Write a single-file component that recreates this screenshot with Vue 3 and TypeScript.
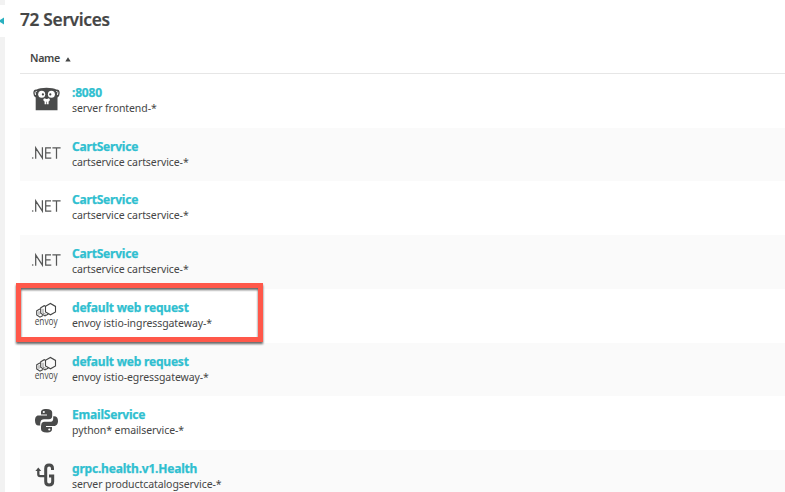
<script setup lang="ts">
type IconName = 'go' | 'dotnet' | 'envoy' | 'python' | 'grpc'

interface Service {
  name: string
  detail: string
  icon: IconName
  highlighted?: boolean
}

const services: Service[] = [
  { name: ':8080', detail: 'server frontend-*', icon: 'go' },
  { name: 'CartService', detail: 'cartservice cartservice-*', icon: 'dotnet' },
  { name: 'CartService', detail: 'cartservice cartservice-*', icon: 'dotnet' },
  { name: 'CartService', detail: 'cartservice cartservice-*', icon: 'dotnet' },
  { name: 'default web request', detail: 'envoy istio-ingressgateway-*', icon: 'envoy', highlighted: true },
  { name: 'default web request', detail: 'envoy istio-egressgateway-*', icon: 'envoy' },
  { name: 'EmailService', detail: 'python* emailservice-*', icon: 'python' },
  { name: 'grpc.health.v1.Health', detail: 'server productcatalogservice-*', icon: 'grpc' },
]
</script>

<template>
  <div class="page">
    <aside class="rail">
      <div class="collapse">
        <svg viewBox="0 0 5 8" width="5" height="8"><path d="M-1.5 4 L4 0.4 V7.6 Z" fill="#2ab0c0" /></svg>
      </div>
    </aside>
    <main class="content">
      <h1>72 Services</h1>
      <div class="head">
        <span>Name</span>
        <svg class="sort" viewBox="0 0 6 5" width="6" height="5"><path d="M0.3 4.6 L3 0.3 L5.7 4.6 Z" fill="#454646" /></svg>
      </div>
      <ul class="list">
        <li v-for="(service, i) in services" :key="i" class="row">
          <svg class="icon" viewBox="0 0 36 34" width="36" height="34">
            <g v-if="service.icon === 'go'">
              <path d="M7.7 28.2 V15.5 Q5.3 14 5.3 11 Q5.4 7.2 8.8 7.6 Q11.5 5.8 18.5 5.8 Q25.5 5.8 28.2 7.6 Q31.6 7.2 31.7 11 Q31.7 14 29.5 15.5 V28.2 Z" fill="#4a4b4b" />
              <path d="M7.5 12.9 Q6.2 10.2 8.7 9 M29.5 12.9 Q30.8 10.2 28.3 9" fill="none" stroke="#fff" stroke-width="1" />
              <circle cx="13.7" cy="12.2" r="3.5" fill="#fff" />
              <circle cx="23.4" cy="12.2" r="3.5" fill="#fff" />
              <circle cx="14.9" cy="12.4" r="1.1" fill="#454646" />
              <circle cx="22.3" cy="12.4" r="1.1" fill="#454646" />
              <ellipse cx="18.6" cy="17.8" rx="3.3" ry="1.9" fill="#fff" />
              <ellipse cx="18.6" cy="16" rx="1.5" ry="1" fill="#454646" />
              <path d="M16.6 18.6 H18.3 V22.2 H16.6 Z M18.9 18.6 H20.6 V22.2 H18.9 Z" fill="#fff" />
            </g>
            <g v-else-if="service.icon === 'dotnet'" fill="none" stroke="#565757" stroke-width="1.25">
              <circle cx="4.7" cy="22" r=".8" fill="#565757" stroke="none" />
              <path d="M7.7 22.7 V11.9 L14.4 22.1 V11.2 M23 11.9 H17.7 V22.1 H23.3 M17.7 16.9 H22.6 M24.4 11.9 H32.6 M28.5 11.9 V22.7" />
            </g>
            <g v-else-if="service.icon === 'envoy'">
              <g fill="none" stroke="#454646" stroke-width="1.1" stroke-linejoin="miter">
                <path d="M17.5 9.2 L22.4 6.5 L27.5 9.4 V14.9 L22.5 17.8 L17.5 15 Z" />
                <path d="M17.2 9 L16.2 8.7 L12.7 10.9 V16.2 L17 18.9 L20.4 17" />
                <path d="M12.5 12.2 L11.6 12 L8.7 13.9 V18 L12 20.2 L15 18.6" />
                <path d="M11 14.2 V17.8 M15 11.8 V16.2 L17.8 17.3" stroke-width=".6" />
              </g>
              <text x="6.7" y="28" textLength="23" lengthAdjust="spacingAndGlyphs">envoy</text>
            </g>
            <g v-else-if="service.icon === 'python'">
              <path d="M18.5 5 C14 5 13 6.5 13 8.5 V10.5 H19 V11.5 H10.5 C7.8 11.5 7 14.1 7 16.5 C7 19.5 8.2 21.5 10.5 21.5 H12.5 V18.5 C12.5 16.5 14 15.3 16 15.3 H21 C23 15.3 24.2 14 24.2 12.2 V8.5 C24.2 6.2 22.3 5 18.5 5 Z" fill="#4a4b4b" />
              <path d="M18.5 28.5 C23 28.5 24 27 24 25 V23 H18 V22 H26 C28.8 22 30 19.5 30 17 C30 14 28.8 12.2 26 12.2 H25.2 V15 C25.2 17 23.8 17.8 21.8 17.8 H16.5 C14.5 17.8 13 19.1 13 21 V25 C13 27.3 14.8 28.5 18.5 28.5 Z" fill="#4a4b4b" />
              <path d="M12.8 21.5 V19.3 Q12.8 16.6 15.8 16.6 H21 Q24.7 16.4 24.7 12.8" fill="none" stroke="#fff" stroke-width=".8" />
              <circle cx="15.8" cy="8" r="1.1" fill="#fff" />
              <circle cx="21.3" cy="25.5" r="1.1" fill="#fff" />
            </g>
            <g v-else fill="none" stroke="#4a4b4b">
              <path d="M24.5 12 V10.6 Q24.5 7 21.1 7 Q17.7 7 17.7 10.6 V23.4 Q17.7 27 21.1 27 Q24.7 27 24.7 23.4 V18 H21" stroke-width="3" />
              <path d="M17 18.1 H12.2 Q10.3 18.1 10.3 16.2 V12" stroke-width="2.3" />
              <path d="M7.4 12.9 L10.3 9.4 L13.2 12.9 Z" fill="#4a4b4b" stroke="none" />
            </g>
          </svg>
          <div class="text">
            <a class="name">{{ service.name }}</a>
            <span class="detail">{{ service.detail }}</span>
          </div>
          <div v-if="service.highlighted" class="marker"></div>
        </li>
      </ul>
    </main>
  </div>
</template>

<style>
body {
  margin: 0;
  background: #fff;
}
</style>

<style scoped>
.page {
  display: flex;
  width: 785px;
  height: 492px;
  overflow: hidden;
  background: #fff;
  color: #454646;
  font-family: "Noto Sans", "Open Sans", sans-serif;
}
.rail {
  flex: 0 0 5px;
  padding-top: 5px;
  background: #f2f2f2;
  box-sizing: border-box;
}
.collapse {
  display: flex;
  align-items: center;
  height: 32px;
  background: #fff;
}
.content {
  flex: 1;
  padding-left: 15px;
}
h1 {
  margin: 0;
  padding-top: 8px;
  height: 40px;
  box-sizing: border-box;
  font-size: 17.3px;
  line-height: 24px;
  font-weight: 600;
  letter-spacing: -0.3px;
  -webkit-text-stroke: 0.2px currentColor;
}
.head {
  display: flex;
  align-items: center;
  gap: 5px;
  height: 34px;
  padding: 4px 0 0 10px;
  box-sizing: border-box;
  border-bottom: 1px solid #e6e6e6;
  font-size: 10.7px;
  line-height: 15px;
  font-weight: 600;
  letter-spacing: -0.35px;
}
.sort {
  margin-top: 1px;
}
.list {
  margin: 0;
  padding: 0;
  list-style: none;
}
.row {
  position: relative;
  display: flex;
  height: 53.72px;
}
.row:nth-child(even) {
  background: #fafafa;
}
.icon {
  flex: none;
  margin: 8px 8px 0;
}
.icon text {
  font-family: "Open Sans", sans-serif;
  font-size: 10px;
  fill: #454646;
}
.text {
  display: flex;
  flex-direction: column;
  padding-top: 10px;
  white-space: nowrap;
}
.name {
  color: #30bfd0;
  font-size: 12px;
  line-height: 17px;
  font-weight: 700;
  letter-spacing: -0.2px;
  -webkit-text-stroke: 0.25px currentColor;
}
.detail {
  font-size: 10.5px;
  line-height: 14px;
  letter-spacing: -0.08px;
}
.marker {
  position: absolute;
  z-index: 1;
  left: -4px;
  top: -6px;
  width: 247px;
  height: 59px;
  box-sizing: border-box;
  border: 5px solid #ff584a;
  filter: drop-shadow(0 2px 1px rgba(0, 0, 0, 0.6));
}
</style>
